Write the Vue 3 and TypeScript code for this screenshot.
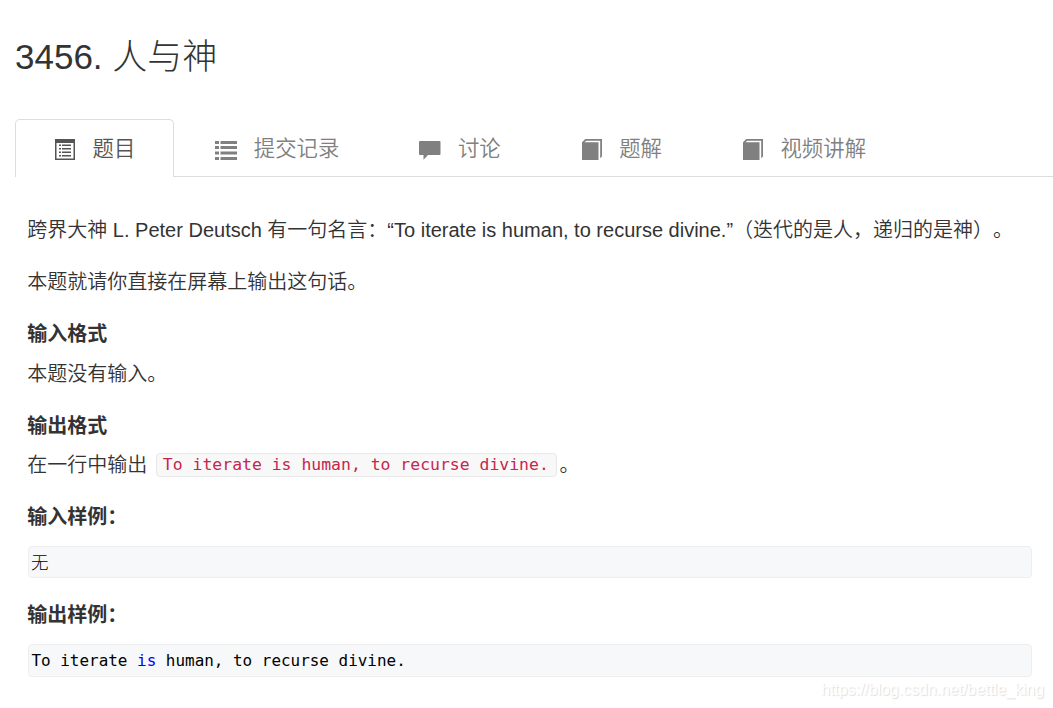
<script setup lang="ts">
type IconName = 'problem' | 'list' | 'comment' | 'book'

interface Tab {
  label: string
  icon: IconName
}

const tabs: Tab[] = [
  { label: '题目', icon: 'problem' },
  { label: '提交记录', icon: 'list' },
  { label: '讨论', icon: 'comment' },
  { label: '题解', icon: 'book' },
  { label: '视频讲解', icon: 'book' },
]
const active = 0
</script>

<template>
  <main class="page">
    <h1 class="title">3456. 人与神</h1>

    <nav class="tabs">
      <a v-for="(tab, i) in tabs" :key="tab.label" class="tab" :class="{ active: i === active }">
        <svg class="icon" width="22" height="22" viewBox="0 0 22 22" fill="currentColor">
          <path
            v-if="tab.icon === 'problem'"
            fill-rule="evenodd"
            d="M1 0H21V21H1ZM2.500 4V19.500H19.500V4ZM5 5.500H7V7H5ZM8 5.500H17V7H8ZM5 9H7V10.500H5ZM8 9H17V10.500H8ZM5 12.500H7V14H5ZM8 12.500H17V14H8ZM5 16H7V17.500H5ZM8 16H17V17.500H8Z"
          />
          <path
            v-else-if="tab.icon === 'list'"
            d="M0 2H4V5H0ZM5.500 2H22V5H5.500ZM0 7H4V10H0ZM5.500 7H22V10H5.500ZM0 12.500H4V15.500H0ZM5.500 12.500H22V15.500H5.500ZM0 18H4V21H0ZM5.500 18H22V21H5.500Z"
          />
          <path
            v-else-if="tab.icon === 'comment'"
            d="M1 2H20.500Q21.500 2 21.500 3V15Q21.500 16 20.500 16H9L4.500 20.800V16H1Q0 16 0 15V3Q0 2 1 2Z"
          />
          <path
            v-else
            d="M4.300 0H21V17.500L19.200 19.300V1.700H5.200L3.500 3.200H17.500V21H1V3.200Z"
          />
        </svg>
        <span>{{ tab.label }}</span>
      </a>
    </nav>

    <article class="content">
      <p class="intro">跨界大神 L. Peter Deutsch 有一句名言：“To iterate is human, to recurse divine.”（迭代的是人，递归的是神）。</p>
      <p>本题就请你直接在屏幕上输出这句话。</p>

      <h4>输入格式</h4>
      <p>本题没有输入。</p>

      <h4>输出格式</h4>
      <p class="with-code">在一行中输出 <code>To iterate is human, to recurse divine.</code> 。</p>

      <h4 class="sample">输入样例：</h4>
      <pre class="first">无</pre>

      <h4 class="sample">输出样例：</h4>
      <pre>To iterate <span class="keyword">is</span> human, to recurse divine.</pre>
    </article>

    <div class="watermark">https://blog.csdn.net/bettle_king</div>
  </main>
</template>

<style>
body {
  margin: 0;
  background: #fff;
}
</style>

<style scoped>
.page {
  position: relative;
  box-sizing: border-box;
  width: 1053px;
  height: 708px;
  padding-top: 37px;
  overflow: hidden;
  color: #333;
  font-family: "Liberation Sans", "Noto Sans CJK SC", sans-serif;
  font-size: 20px;
  text-spacing-trim: space-all;
}

.title {
  height: 40px;
  margin: 0 0 42px 15px;
  font-size: 35px;
  font-weight: 300;
  line-height: 40px;
  white-space: nowrap;
}

.tabs {
  display: flex;
  box-sizing: border-box;
  height: 58px;
  margin-left: 15px;
  border-bottom: 1px solid #ddd;
}

.tab {
  display: flex;
  flex: none;
  box-sizing: border-box;
  height: 58px;
  margin-right: 2.500px;
  padding: 0 37.500px 0 38px;
  border: 1px solid transparent;
  border-bottom: 0;
  border-radius: 5px 5px 0 0;
  color: #808080;
  font-size: 21.400px;
  font-weight: 350;
  line-height: 58px;
}

.tab.active {
  border-color: #ddd;
  background: #fff;
  color: #555;
}

.icon {
  flex: none;
  margin: 19px 16.500px 0 0;
}

.content {
  padding: 40px 21px 0 27.300px;
}

p {
  height: 28px;
  margin: 0 0 23px;
  font-weight: 350;
  line-height: 28px;
  white-space: nowrap;
}

.intro {
  margin-bottom: 24px;
  margin-top: -1px;
}

h4 {
  height: 28px;
  margin: 0 0 12px;
  font-size: 20px;
  font-weight: 700;
  line-height: 28px;
}

p + h4 {
  margin-top: 24px;
}

.with-code {
  margin-top: -1px;
}

.sample {
  margin-bottom: 15px;
}

code {
  display: inline-block;
  box-sizing: border-box;
  width: 401px;
  height: 24px;
  margin: -4px -3px 0 3px;
  padding-left: 6px;
  border: 1px solid #e8e8e8;
  border-radius: 4px;
  background: #f8f8f8;
  color: #c7254e;
  font-family: "DejaVu Sans Mono", "Liberation Mono", monospace;
  font-size: 16.450px;
  font-weight: 400;
  line-height: 22px;
  vertical-align: 2px;
}

pre {
  box-sizing: border-box;
  height: 33px;
  margin: 0 0 0 0.700px;
  padding-left: 2.500px;
  border: 1px solid #eee;
  border-radius: 4px;
  background: #f6f8fa;
  color: #000;
  font-family: "DejaVu Sans Mono", "Noto Sans CJK SC", monospace;
  font-size: 15.950px;
  line-height: 31px;
}

pre.first {
  height: 32px;
  margin-bottom: 23px;
  padding-left: 2px;
  font-family: "Noto Sans CJK SC", sans-serif;
  font-size: 17.500px;
  font-weight: 300;
  line-height: 29px;
}

.keyword {
  color: #00f;
}

.watermark {
  position: absolute;
  right: 9px;
  bottom: 9px;
  color: #fff;
  font-size: 15.850px;
  line-height: 18px;
  text-shadow: 1px 1px 1px #ddd;
}
</style>
